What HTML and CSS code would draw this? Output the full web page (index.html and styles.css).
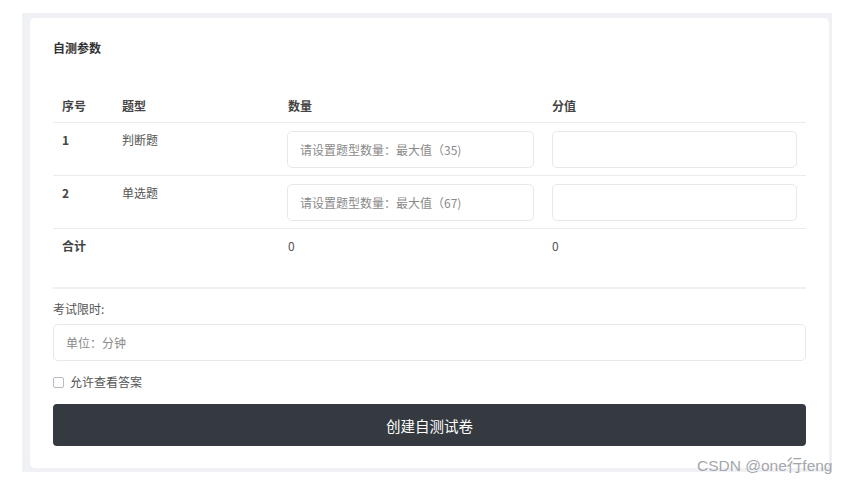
FILE: index.html
```html
<!DOCTYPE html>
<html lang="zh-CN">
<head>
    <meta charset="UTF-8">
    <meta name="viewport" content="width=device-width, initial-scale=1.0">
    <title>自测参数</title>
    <link rel="stylesheet" href="styles.css">
</head>
<body>
    <div class="page">
        <div class="card">
            <div class="card-title">自测参数</div>

            <table class="param-table">
                <thead>
                    <tr>
                        <th class="col-no">序号</th>
                        <th class="col-type">题型</th>
                        <th class="col-count">数量</th>
                        <th class="col-score">分值</th>
                    </tr>
                </thead>
                <tbody>
                    <tr>
                        <td class="num">1</td>
                        <td>判断题</td>
                        <td><input type="text" class="count-input" placeholder="请设置题型数量：最大值（35)"></td>
                        <td><input type="text"></td>
                    </tr>
                    <tr>
                        <td class="num">2</td>
                        <td>单选题</td>
                        <td><input type="text" class="count-input" placeholder="请设置题型数量：最大值（67)"></td>
                        <td><input type="text"></td>
                    </tr>
                    <tr class="total">
                        <td class="num">合计</td>
                        <td></td>
                        <td>0</td>
                        <td>0</td>
                    </tr>
                </tbody>
            </table>

            <hr class="divider">

            <div class="form-group">
                <label for="time-limit">考试限时:</label>
                <input type="text" id="time-limit" placeholder="单位：分钟">
            </div>

            <div class="check-row">
                <input type="checkbox" id="show-answer">
                <label for="show-answer">允许查看答案</label>
            </div>

            <button class="create-btn">创建自测试卷</button>
        </div>
    </div>
    <div class="watermark">CSDN @one行feng</div>
</body>
</html>
```

FILE: styles.css
```css
body {
    margin: 0;
    padding: 13px 14px 13px 22px;
    background-color: #fff;
    font-family: "Noto Sans CJK SC", "Noto Sans", sans-serif;
    font-size: 12px;
    color: #555;
}

.page {
    background-color: #eff1f5;
    padding: 5px 3px 4px 8px;
}

.card {
    background-color: #fff;
    border-radius: 5px;
    padding: 21px 23px 22px 23px;
}

.card-title {
    font-weight: bold;
    color: #333;
    line-height: 17px;
    margin-bottom: 33px;
}

.param-table {
    width: 100%;
    border-collapse: collapse;
    table-layout: fixed;
}

.param-table th,
.param-table td {
    text-align: left;
    vertical-align: top;
    padding: 8px 9px 7px 9px;
    line-height: 18px;
}

.param-table th {
    font-weight: bold;
    color: #444;
    border-bottom: 1px solid #e8ebef;
}

.param-table tbody tr {
    border-bottom: 1px solid #e9ecef;
}

.param-table tbody tr.total {
    border-bottom: none;
}

.param-table .num {
    font-weight: bold;
    color: #444;
}

.col-no {
    width: 42px;
}

.col-type {
    width: 148px;
}

.col-count {
    width: 246px;
}

input[type="text"] {
    display: block;
    box-sizing: border-box;
    width: 100%;
    height: 37px;
    padding: 0 12px;
    border: 1px solid #e6e8eb;
    border-radius: 5px;
    font-family: inherit;
    font-size: 12px;
    color: #555;
    background-color: #fff;
}

input[type="text"]::placeholder {
    color: #8a8a8a;
}

.param-table .count-input {
    margin-left: -1px;
    width: calc(100% + 1px);
}

.divider {
    border: none;
    border-top: 2px solid #eef0f3;
    margin: 25px 0 0 0;
}

.form-group {
    margin-top: 11px;
}

.form-group label {
    display: block;
    line-height: 18px;
    margin-bottom: 6px;
    color: #555;
}

.check-row {
    display: flex;
    align-items: center;
    margin-top: 12px;
    line-height: 18px;
}

.check-row input {
    appearance: none;
    width: 11px;
    height: 11px;
    margin: 0 6px 0 0;
    border: 1px solid #b8bcc2;
    border-radius: 2px;
    background-color: #fff;
}

.create-btn {
    display: block;
    width: 100%;
    height: 42px;
    margin-top: 13px;
    padding-top: 1px;
    border: none;
    border-radius: 4px;
    background-color: #343a40;
    color: #fff;
    font-family: inherit;
    font-size: 14.5px;
    cursor: pointer;
}

.watermark {
    position: absolute;
    left: 697px;
    top: 457px;
    font-family: "Liberation Sans", "Noto Sans CJK SC", sans-serif;
    font-size: 15.5px;
    color: #a3a6aa;
    line-height: 18px;
}
```
